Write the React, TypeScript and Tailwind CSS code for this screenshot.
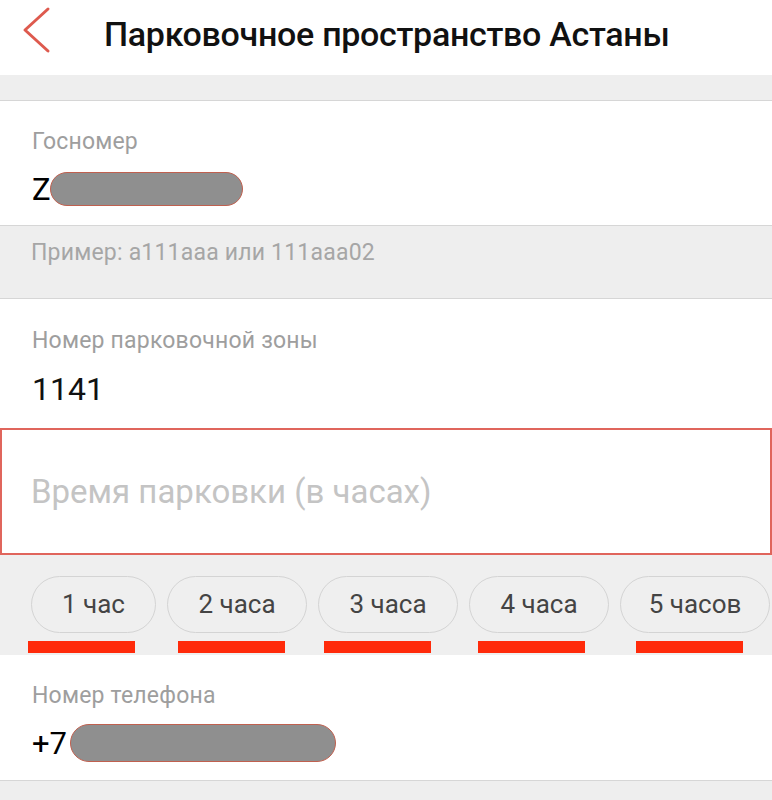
const chips = ['1 час', '2 часа', '3 часа', '4 часа', '5 часов']

const chipWidths = ['w-[125px]', 'w-[140px]', 'w-[140px]', 'w-[140px]', 'w-[150px]']

// hand-drawn marks under the chips, not centred on them
const markOffsets = ['ml-[28px]', 'ml-[43px]', 'ml-[39px]', 'ml-[47px]', 'ml-[51px]']

function Masked({ className }: { className: string }) {
  return (
    <span
      className={`inline-block rounded-full bg-[#8f8f8f] border border-[#c0604f] ${className}`}
    />
  )
}

export default function App() {
  return (
    <div className="w-[772px] h-[800px] overflow-hidden bg-[#eeeeee] font-['Roboto',sans-serif]">
      {/* header */}
      <div className="h-[75px] bg-white flex items-start">
        <svg width="30" height="48" viewBox="0 0 30 48" className="ml-[21px] mt-[6px] shrink-0">
          <path d="M27 3 L4 24 L27 45" fill="none" stroke="#de5a4e" strokeWidth="3" strokeLinecap="round" strokeLinejoin="round" />
        </svg>
        <h1 className="ml-[53px] mt-[17px] text-[34px] leading-none text-[#111111] font-medium tracking-[-0.3px]">
          Парковочное пространство Астаны
        </h1>
      </div>
      <div className="h-[26px] bg-[#eeeeee] border-b border-[#d6d6d6]" />

      {/* plate */}
      <div className="h-[124px] bg-white px-[32px] pt-[29px]">
        <div className="text-[23px] leading-none text-[#9e9e9e] tracking-[0.2px]">Госномер</div>
        <div className="mt-[18px] flex items-center h-[36px]">
          <span className="text-[31px] leading-none text-black">Z</span>
          <Masked className="w-[193px] h-[34px] -ml-[1px]" />
        </div>
      </div>
      <div className="h-[74px] bg-[#eeeeee] border-y border-[#d6d6d6] px-[31px] pt-[15px]">
        <div className="text-[23px] leading-none text-[#a6a6a6] tracking-[0.2px]">Пример: а111ааа или 111ааа02</div>
      </div>

      {/* zone */}
      <div className="h-[129px] bg-white px-[32px] pt-[30px]">
        <div className="text-[23px] leading-none text-[#9e9e9e] tracking-[0.2px]">Номер парковочной зоны</div>
        <div className="mt-[21px] text-[32px] leading-none text-[#111111]">1141</div>
      </div>

      {/* time input */}
      <div className="h-[127px] bg-white border-2 border-[#e0655c] flex items-center px-[29px]">
        <span className="text-[33px] leading-none text-[#c4c4c4]">Время парковки (в часах)</span>
      </div>

      {/* chips */}
      <div className="h-[100px] bg-[#efefef] pt-[21px] overflow-hidden">
        <div className="flex gap-[11px] pl-[31px]">
          {chips.map((c, i) => (
            <div
              key={c}
              className={`${chipWidths[i]} shrink-0 h-[57px] rounded-full border border-[#d4d4d4] flex items-center justify-center text-[26px] text-[#444444]`}
            >
              {c}
            </div>
          ))}
        </div>
        <div className="flex mt-[8px]">
          {markOffsets.map((m) => (
            <div key={m} className={`${m} shrink-0 w-[107px] h-[12px] bg-[#ff2a0a]`} />
          ))}
        </div>
      </div>

      {/* phone */}
      <div className="h-[126px] bg-white border-b border-[#d6d6d6] px-[32px] pt-[29px]">
        <div className="text-[23px] leading-none text-[#9e9e9e] tracking-[0.2px]">Номер телефона</div>
        <div className="mt-[16px] flex items-center h-[40px]">
          <span className="text-[31px] leading-none text-black">+7</span>
          <Masked className="w-[266px] h-[38px] ml-[3px]" />
        </div>
      </div>
    </div>
  )
}
